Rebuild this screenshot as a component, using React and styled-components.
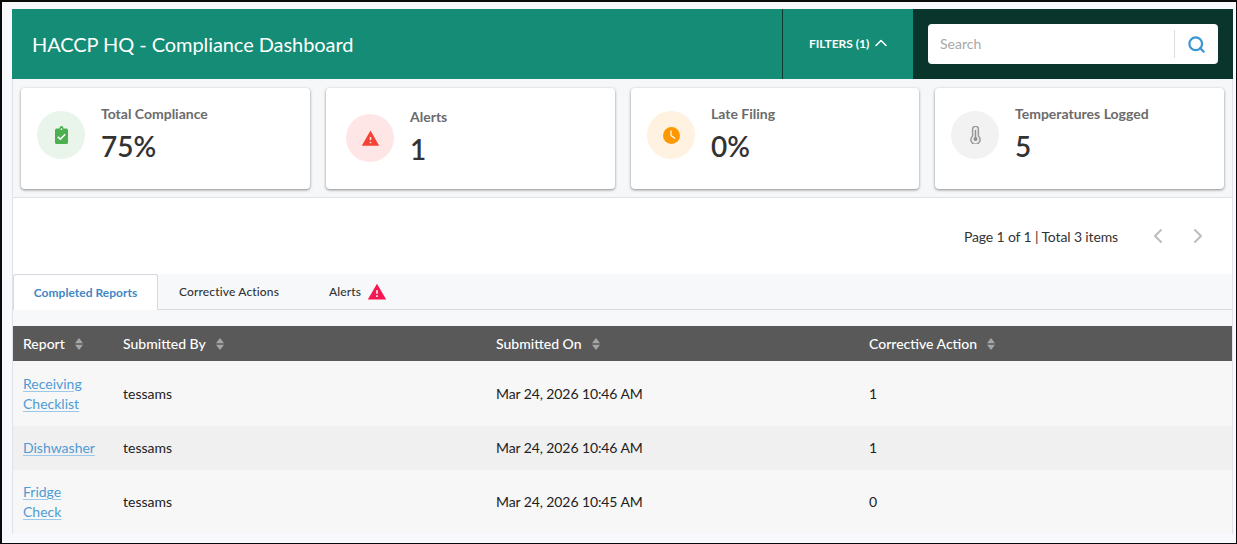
import React from "react";
import styled, { createGlobalStyle } from "styled-components";
import { MdWarning } from "react-icons/md";
import { Search } from "lucide-react";
import { FiChevronUp, FiChevronLeft, FiChevronRight } from "react-icons/fi";

const GlobalStyle = createGlobalStyle`
  html, body {
    margin: 0;
    padding: 0;
    height: 100%;
    overflow: hidden;
  }
  body {
    background: #f7f9fc;
    font-family: Lato, "Open Sans", sans-serif;
  }
  * {
    box-sizing: border-box;
  }
`;

const Frame = styled.div`
  width: 1237px;
  height: 544px;
  border: solid #0a0a0a;
  border-width: 2px 1px 1px 2px;
  padding: 7px 3px 0 10px;
  overflow: hidden;
`;

const Header = styled.header`
  display: flex;
  height: 70px;
  background: #158c75;
`;

const Title = styled.h1`
  flex: 1;
  margin: 0;
  padding-left: 20px;
  font-size: 20px;
  font-weight: 400;
  line-height: 70px;
  letter-spacing: -0.07px;
  color: #fff;
`;

const FiltersButton = styled.button`
  display: flex;
  align-items: center;
  gap: 2px;
  width: 131px;
  padding: 0 0 2px 26px;
  border: 0;
  border-left: 1px solid #0e3a30;
  background: transparent;
  color: #fff;
  font: 700 12px Lato, sans-serif;
  white-space: nowrap;
`;

const SearchPanel = styled.div`
  display: flex;
  align-items: center;
  justify-content: center;
  width: 320px;
  background: #0a352c;
`;

const SearchBox = styled.div`
  display: flex;
  align-items: center;
  width: 290px;
  height: 40px;
  padding: 0 0 0 12px;
  border-radius: 4px;
  background: #fff;
`;

const SearchInput = styled.input`
  flex: 1;
  min-width: 0;
  border: 0;
  outline: 0;
  padding: 0 0 2px;
  font: 400 14px Lato, sans-serif;
  color: #333;
  &::placeholder {
    color: #a8a8a8;
  }
`;

const SearchIconWrap = styled.span`
  display: flex;
  align-items: center;
  justify-content: center;
  width: 44px;
  height: 28px;
  border-left: 1px solid #dcdfe2;
  color: #3c96d3;
`;

const Body = styled.main`
  border-left: 1px solid #dfe2e6;
  border-right: 1px solid #dfe2e6;
`;

const Stats = styled.section`
  display: grid;
  grid-template-columns: 289px 289px 288px 289px;
  gap: 16px;
  height: 119px;
  padding: 9px 8px 8px;
  background: #f6f7f9;
  border-bottom: 1px solid #dfe2e6;
`;

const Card = styled.article`
  display: flex;
  align-items: center;
  height: 101px;
  padding: ${(props) => props.$pad};
  background: #fff;
  border-radius: 4px;
  box-shadow: 0 1px 3px rgba(0, 0, 0, 0.45);
`;

const IconCircle = styled.span`
  display: flex;
  flex: none;
  align-items: center;
  justify-content: center;
  width: 48px;
  height: 48px;
  margin-right: 16px;
  border-radius: 50%;
  background: ${(props) => props.$bg};
  color: ${(props) => props.$color};
`;

const StatText = styled.div`
  display: flex;
  flex-direction: column;
  padding-bottom: 2px;
`;

const StatLabel = styled.span`
  font-size: 14px;
  font-weight: 700;
  line-height: 18px;
  color: #6b6b6b;
`;

const StatValue = styled.span`
  margin-top: 5px;
  font-size: 28px;
  font-weight: 600;
  line-height: 36px;
  color: #333;
`;

const Pager = styled.div`
  display: flex;
  align-items: center;
  justify-content: flex-end;
  height: 76px;
  padding: 0 22px 0 0;
  background: #fff;
  font-size: 14px;
  letter-spacing: -0.13px;
  color: #333;
`;

const PagerArrows = styled.span`
  display: flex;
  gap: 16px;
  margin-left: 28px;
  color: #bdbdbd;
`;

const Tabs = styled.nav`
  display: flex;
  height: 36px;
  background: #f6f8fa;
  border-bottom: 1px solid #d5dae0;
`;

const Tab = styled.div`
  display: flex;
  align-items: center;
  justify-content: center;
  gap: 6px;
  height: ${(props) => (props.$active ? "36px" : "35px")};
  width: ${(props) => props.$width}px;
  font-size: 12px;
  font-weight: ${(props) => (props.$active ? 700 : 500)};
  letter-spacing: ${(props) => (props.$active ? "0.03px" : "0.15px")};
  color: ${(props) => (props.$active ? "#3f87c5" : "#333")};
  background: ${(props) => (props.$active ? "#fff" : "transparent")};
  border: ${(props) => (props.$active ? "1px solid #d5dae0" : "0")};
  border-bottom: 0;
  border-radius: 3px 3px 0 0;
`;

const Reports = styled.div`
  padding-top: 16px;
  background: #f6f8fa;
`;

const Table = styled.table`
  width: 100%;
  table-layout: fixed;
  border-collapse: collapse;
  font-size: 14px;
  color: #222;
`;

const HeadCell = styled.th`
  width: ${(props) => props.$width};
  height: 35px;
  padding: 0 10px;
  background: #595959;
  color: #fff;
  font-size: 14px;
  font-weight: 500;
  text-align: left;
`;

const SortWrap = styled.svg`
  margin-left: 10px;
  vertical-align: -1px;
`;

const Row = styled.tr`
  height: ${(props) => props.$height}px;
  background: ${(props) => (props.$shade ? "#f0f0f0" : "#f7f7f7")};
`;

const Cell = styled.td`
  padding: 0 10px;
  line-height: 20px;
  font-size: 14px;
`;

const DateCell = styled(Cell)`
  letter-spacing: -0.1px;
`;

const ReportLink = styled.a`
  color: #4f9bd4;
  text-decoration: underline;
  text-decoration-color: #9cc8ea;
  text-underline-offset: 2px;
`;

const SortIcon = () => (
  <SortWrap width="8" height="12" viewBox="0 0 8 12" fill="#a6a6a6">
    <path d="M4 0 L8 5.2 H0 Z M0 6.8 H8 L4 12 Z" />
  </SortWrap>
);

const ClipboardIcon = () => (
  <svg width="13" height="18" viewBox="0 0 13 18">
    <path
      d="M4.6 2.4V2a1.9 1.9 0 0 1 3.8 0v.4h3A1.6 1.6 0 0 1 13 4v12.4a1.6 1.6 0 0 1-1.6 1.6H1.6A1.6 1.6 0 0 1 0 16.4V4a1.6 1.6 0 0 1 1.6-1.6Z"
      fill="#4caf50"
    />
    <circle cx="6.5" cy="3.2" r="0.9" fill="#e9f4ea" />
    <path d="M2.8 10.8 5.3 13.2 10.2 8.2" fill="none" stroke="#fff" strokeWidth="1.6" />
  </svg>
);

const ClockIcon = () => (
  <svg width="17" height="17" viewBox="0 0 17 17">
    <circle cx="8.5" cy="8.5" r="8.5" fill="#ff9800" />
    <path d="M8 3.5V8.6L12.2 11.4" fill="none" stroke="#fff" strokeWidth="1.2" />
  </svg>
);

const ThermometerIcon = () => (
  <svg width="11" height="18" viewBox="0 0 11 18" fill="none">
    <path
      d="M2.6 10V3.2a2.9 2.9 0 0 1 5.8 0V10a4.6 4.6 0 1 1-5.8 0Z"
      stroke="#9a9a9a"
      strokeWidth="1.5"
      fill="#ededed"
    />
    <circle cx="5.5" cy="13" r="2" fill="#8f8f8f" />
    <rect x="4.8" y="4" width="1.4" height="8" fill="#8f8f8f" />
  </svg>
);

const stats = [
  {
    label: "Total Compliance",
    value: "75%",
    pad: "0 16px 7px",
    bg: "#e9f4ea",
    color: "#4caf50",
    icon: <ClipboardIcon />,
  },
  {
    label: "Alerts",
    value: "1",
    pad: "0 20px 1px",
    bg: "#fee6e6",
    color: "#f44336",
    icon: <MdWarning size={19} />,
  },
  {
    label: "Late Filing",
    value: "0%",
    pad: "0 16px 7px",
    bg: "#fff2e0",
    color: "#ff9800",
    icon: <ClockIcon />,
  },
  {
    label: "Temperatures Logged",
    value: "5",
    pad: "0 16px 7px",
    bg: "#f2f2f2",
    color: "#8f8f8f",
    icon: <ThermometerIcon />,
  },
];

const rows = [
  { report: ["Receiving", "Checklist"], date: "Mar 24, 2026 10:46 AM", actions: 1, height: 65 },
  { report: ["Dishwasher"], date: "Mar 24, 2026 10:46 AM", actions: 1, height: 44, shade: true },
  { report: ["Fridge", "Check"], date: "Mar 24, 2026 10:45 AM", actions: 0, height: 64 },
];

const App = () => (
  <Frame>
    <GlobalStyle />
    <Header>
      <Title>HACCP HQ - Compliance Dashboard</Title>
      <FiltersButton>
        FILTERS (1) <FiChevronUp size={20} strokeWidth={1.8} />
      </FiltersButton>
      <SearchPanel>
        <SearchBox>
          <SearchInput placeholder="Search" />
          <SearchIconWrap>
            <Search size={19} strokeWidth={2.8} />
          </SearchIconWrap>
        </SearchBox>
      </SearchPanel>
    </Header>
    <Body>
      <Stats>
        {stats.map((s) => (
          <Card key={s.label} $pad={s.pad}>
            <IconCircle $bg={s.bg} $color={s.color}>
              {s.icon}
            </IconCircle>
            <StatText>
              <StatLabel>{s.label}</StatLabel>
              <StatValue>{s.value}</StatValue>
            </StatText>
          </Card>
        ))}
      </Stats>
      <Pager>
        Page 1 of 1 | Total 3 items
        <PagerArrows>
          <FiChevronLeft size={24} />
          <FiChevronRight size={24} />
        </PagerArrows>
      </Pager>
      <Tabs>
        <Tab $active $width={145}>Completed Reports</Tab>
        <Tab $width={142}>Corrective Actions</Tab>
        <Tab $width={116}>
          Alerts <MdWarning size={20} color="#f5174f" />
        </Tab>
      </Tabs>
      <Reports>
        <Table>
          <thead>
            <tr>
              <HeadCell $width="100px">Report<SortIcon /></HeadCell>
              <HeadCell $width="373px">Submitted By<SortIcon /></HeadCell>
              <HeadCell $width="373px">Submitted On<SortIcon /></HeadCell>
              <HeadCell>Corrective Action<SortIcon /></HeadCell>
            </tr>
          </thead>
          <tbody>
            {rows.map((r) => (
              <Row key={r.report[0]} $height={r.height} $shade={r.shade}>
                <Cell>
                  <ReportLink href="#">{r.report.join(" ")}</ReportLink>
                </Cell>
                <Cell>tessams</Cell>
                <DateCell>{r.date}</DateCell>
                <Cell>{r.actions}</Cell>
              </Row>
            ))}
          </tbody>
        </Table>
      </Reports>
    </Body>
  </Frame>
);

export default App;
